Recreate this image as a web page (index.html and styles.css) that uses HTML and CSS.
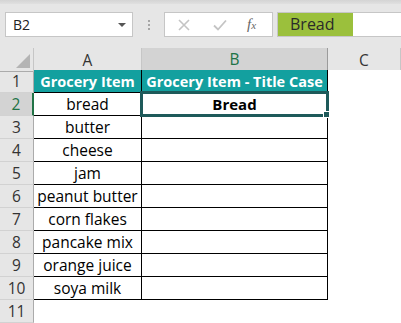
FILE: index.html
```html
<!DOCTYPE html>
<html>
<head>
<meta charset="utf-8">
<link rel="stylesheet" href="styles.css">
</head>
<body>
<div class="app">
  <div class="topstrip"></div>
  <div class="fbar">
    <div class="namebox"><span class="nb-text">B2</span><span class="nb-arrow"></span></div>
    <div class="dots"><i></i><i></i><i></i></div>
    <div class="fbtns">
      <svg class="ic-x" width="12" height="12" viewBox="0 0 12 12"><path d="M1 1L11 11M11 1L1 11" stroke="#c4c4c4" stroke-width="1.6" fill="none"/></svg>
      <svg class="ic-check" width="14" height="12" viewBox="0 0 14 12"><path d="M1 6.5L5 10.5L13 1.5" stroke="#c4c4c4" stroke-width="1.8" fill="none"/></svg>
      <span class="ic-fx"><i>f</i><span>x</span></span>
    </div>
    <div class="finput"><span class="fval">Bread</span></div>
  </div>
  <div class="sheet">
    <div class="row colhead">
      <div class="corner"><span class="tri"></span></div>
      <div class="ch">A</div>
      <div class="ch sel">B</div>
      <div class="ch">C</div>
    </div>
    <div class="row">
      <div class="rh">1</div>
      <div class="c head">Grocery Item</div>
      <div class="c head">Grocery Item - Title Case</div>
      <div class="e"></div>
    </div>
    <div class="row">
      <div class="rh sel">2</div>
      <div class="c">bread</div>
      <div class="c active"><b>Bread</b></div>
      <div class="e"></div>
    </div>
    <div class="row"><div class="rh">3</div><div class="c">butter</div><div class="c"></div><div class="e"></div></div>
    <div class="row"><div class="rh">4</div><div class="c">cheese</div><div class="c"></div><div class="e"></div></div>
    <div class="row"><div class="rh">5</div><div class="c">jam</div><div class="c"></div><div class="e"></div></div>
    <div class="row"><div class="rh">6</div><div class="c">peanut butter</div><div class="c"></div><div class="e"></div></div>
    <div class="row"><div class="rh">7</div><div class="c">corn flakes</div><div class="c"></div><div class="e"></div></div>
    <div class="row"><div class="rh">8</div><div class="c">pancake mix</div><div class="c"></div><div class="e"></div></div>
    <div class="row"><div class="rh">9</div><div class="c">orange juice</div><div class="c"></div><div class="e"></div></div>
    <div class="row"><div class="rh">10</div><div class="c">soya milk</div><div class="c"></div><div class="e"></div></div>
    <div class="row blank"><div class="rh">11</div><div class="e"></div><div class="e"></div><div class="e"></div></div>
  </div>
</div>
</body>
</html>
```
FILE: styles.css
```css
* { box-sizing: border-box; }
html, body { margin: 0; padding: 0; }
body {
  width: 401px; height: 323px; overflow: hidden;
  font-family: "Open Sans", Lato, "Liberation Sans", sans-serif;
  background: #fff;
}
.topstrip {
  height: 4px;
  background: linear-gradient(#d4d4d4, #e0e0e0);
}
.fbar {
  height: 44px;
  background: #e6e6e6;
  display: flex;
  align-items: flex-start;
  padding: 8px 0 0 5px;
}
.namebox {
  width: 128px; height: 25px;
  background: #fff;
  border: 1px solid #c6c6c6;
  display: flex; align-items: center; justify-content: space-between;
  padding: 0 6px 0 7px;
}
.nb-text { font-size: 14px; color: #222; }
.nb-arrow {
  width: 0; height: 0;
  border-left: 4px solid transparent; border-right: 4px solid transparent;
  border-top: 4px solid #555;
}
.dots {
  width: 31px; height: 25px;
  display: flex; flex-direction: column; align-items: center; justify-content: center; gap: 2px;
}
.dots i { display: block; width: 2px; height: 2px; background: #a6a6a6; }
.fbtns {
  width: 109px; height: 25px;
  background: #fff; border: 1px solid #c6c6c6;
  display: flex; align-items: center;
  padding-left: 13px;
}
.ic-x { margin-right: 23px; }
.ic-check { margin-right: 20px; }
.ic-fx { font-family: "Liberation Serif", serif; color: #666; font-size: 15px; }
.ic-fx i { font-style: italic; }
.ic-fx span { font-size: 11px; font-style: italic; }
.finput {
  margin-left: 4px;
  flex: 1; height: 25px;
  background: #fff; border: 1px solid #c6c6c6; border-right: none;
}
.fval {
  display: inline-block; height: 23px; width: 75px;
  background: #9bc03c;
  font-size: 16px; color: #2a2a2a; line-height: 23px;
  padding-left: 12px;
}
.sheet { background: #fff; }
.row {
  display: grid;
  grid-template-columns: 34px 108px 186px 73px;
  height: 23px;
}
.colhead { height: 22px; background: #e6e6e6; }
.corner { position: relative; border-right: 1px solid #c6c6c6; border-bottom: 1px solid #ababab; }
.tri {
  position: absolute; right: 3px; bottom: 3px;
  width: 0; height: 0;
  border-left: 14px solid transparent;
  border-bottom: 14px solid #b4b4b4;
}
.ch {
  font-size: 15.5px; color: #333;
  display: flex; align-items: center; justify-content: center;
  border-right: 1px solid #c6c6c6; border-bottom: 1px solid #ababab;
}
.ch.sel { background: #d3d3d3; color: #217346; border-bottom: 2px solid #217346; border-right-color: #9b9b9b; }
.rh {
  background: #e6e6e6;
  font-size: 15.5px; color: #333;
  display: flex; align-items: center; justify-content: center;
  border-right: 1px solid #ababab; border-bottom: 1px solid #d2d2d2;
}
.rh.sel { background: #d3d3d3; color: #217346; border-right: 2px solid #217346; }
.c {
  font-size: 15.5px; color: #000;
  display: flex; align-items: center; justify-content: center;
  border-right: 1px solid #000; border-bottom: 1px solid #000;
  white-space: nowrap;
}
.c.head { background: #13a09f; color: #fff; font-weight: bold; font-size: 14.5px; }
.c b { font-size: 15px; }
.c.active { position: relative; }
.c.active::after {
  content: ""; position: absolute;
  left: -2px; top: -2px; right: -2px; bottom: -2px;
  border: 3px solid #1e5a5a;
}
.c.active::before {
  content: ""; position: absolute; z-index: 1;
  right: -3px; bottom: -3px; width: 5px; height: 5px;
  background: #1e5a5a; border: 1px solid #fff;
}
.e { background: #fff; }
```
